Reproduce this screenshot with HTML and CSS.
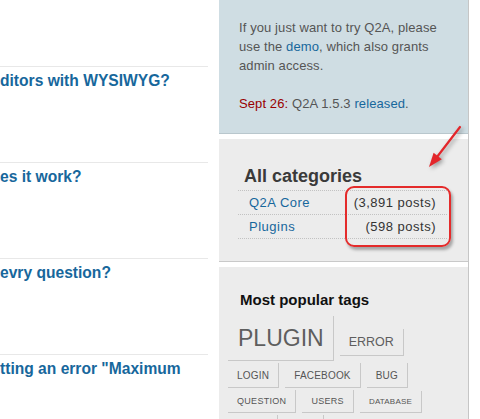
FILE: index.html
```html
<!DOCTYPE html>
<html>
<head>
<meta charset="utf-8">
<link rel="stylesheet" href="styles.css">
</head>
<body>
<div class="page">
  <main class="qlist">
    <div class="qtop"></div>
    <div class="qitem"><a class="qtitle" href="#">ditors with WYSIWYG?</a></div>
    <div class="qitem"><a class="qtitle" href="#">es it work?</a></div>
    <div class="qitem"><a class="qtitle" href="#">evry question?</a></div>
    <div class="qitem"><a class="qtitle" href="#">tting an error "Maximum</a></div>
  </main>
  <aside class="side">
    <div class="box info">
      <p>If you just want to try Q2A, please<br>use the <a href="#">demo</a>, which also grants<br>admin access.</p>
      <p><span class="date">Sept 26:</span> Q2A 1.5.3 <a href="#">released</a>.</p>
    </div>
    <div class="box cats">
      <h2 class="cats-title">All categories</h2>
      <ul class="catlist">
        <li class="cat"><a href="#">Q2A Core</a><span class="count">(3,891 posts)</span></li>
        <li class="cat"><a href="#">Plugins</a><span class="count">(598 posts)</span></li>
      </ul>
    </div>
    <div class="box tags">
      <h2 class="tags-title">Most popular tags</h2>
      <div class="cloud">
        <div class="tagrow">
          <a class="tag t23" href="#">PLUGIN</a>
          <a class="tag t12" href="#">ERROR</a>
        </div>
        <div class="tagrow">
          <a class="tag t10" href="#">LOGIN</a>
          <a class="tag t10" href="#">FACEBOOK</a>
          <a class="tag t10" href="#">BUG</a>
        </div>
        <div class="tagrow">
          <a class="tag t9" href="#">QUESTION</a>
          <a class="tag t9" href="#">USERS</a>
          <a class="tag t8" href="#">DATABASE</a>
        </div>
        <div class="tagrow">
          <span class="tag tag-cut w50"></span>
          <span class="tag tag-cut w40"></span>
        </div>
      </div>
    </div>
  </aside>
  <div class="annot-rect"></div>
  <svg class="annot-arrow" width="480" height="419" viewBox="0 0 480 419">
    <g class="arrow">
      <line x1="460" y1="127" x2="437" y2="157" stroke="#e3262b" stroke-width="2.2" stroke-linecap="round"/>
      <polygon points="429,167 441.8,159.2 433.6,152.8" fill="#e3262b"/>
    </g>
  </svg>
</div>
</body>
</html>
```
FILE: styles.css
```css
html, body {
  margin: 0;
  padding: 0;
  overflow: hidden;
  background: #ffffff;
}

body {
  font-family: "Liberation Sans", Arial, sans-serif;
  width: 480px;
  height: 419px;
}

.page {
  position: relative;
  display: flex;
  align-items: flex-start;
  width: 480px;
  height: 419px;
  overflow: hidden;
}

/* ---------- question list ---------- */
.qlist {
  width: 208px;
  flex: none;
}

.qtop {
  height: 66px;
}

.qitem {
  border-top: 1px solid #e8e8e8;
  padding-top: 4px;
  box-sizing: border-box;
  height: 96px;
}

.qtitle {
  display: block;
  font-size: 15.6px;
  line-height: 20px;
  font-weight: bold;
  color: #17679c;
  text-decoration: none;
  white-space: nowrap;
}

/* ---------- sidebar ---------- */
.side {
  flex: none;
  width: 249px;
  margin-left: 11px;
  border-right: 1px solid #c6c6c6;
  min-height: 419px;
}

.box {
  box-sizing: border-box;
}

.info {
  background: #cfdde3;
  border-bottom: 1px solid #b9c7cd;
  padding: 18px 10px 20px 20px;
  font-size: 13px;
  line-height: 19px;
  letter-spacing: 0.1px;
  color: #555555;
}

.info p {
  margin: 0;
  white-space: nowrap;
}

.info p + p {
  margin-top: 19px;
}

.info a {
  color: #17679c;
  text-decoration: none;
}

.date {
  color: #990000;
}

.cats {
  margin-top: 5px;
  background: #ececec;
  border-bottom: 1px solid #c9c9c9;
  padding: 26px 21px 22px 19px;
}

.cats-title {
  margin: 0 0 3px 6px;
  font-size: 18px;
  line-height: 22px;
  font-weight: bold;
  color: #3a3a3a;
}

.catlist {
  list-style: none;
  margin: 0;
  padding: 0;
  border-top: 1px dotted #c2c2c2;
}

.cat {
  display: flex;
  justify-content: space-between;
  align-items: center;
  height: 24px;
  box-sizing: border-box;
  padding: 0 11px;
  border-bottom: 1px dotted #c2c2c2;
  font-size: 13px;
  letter-spacing: 0.5px;
}

.cat a {
  color: #17679c;
  text-decoration: none;
}

.count {
  color: #333333;
}

.tags {
  margin-top: 5px;
  background: #ececec;
  padding: 24px 9px 0 9px;
  min-height: 160px;
}

.tags-title {
  margin: 0 0 7px 12px;
  font-size: 15px;
  line-height: 18px;
  font-weight: bold;
  color: #111111;
}

.cloud {
  display: flex;
  flex-direction: column;
  gap: 2px;
}

.tagrow {
  display: flex;
  align-items: baseline;
  gap: 6px;
}

.tag {
  display: block;
  color: #555555;
  text-decoration: none;
  border-right: 1px solid #c8c8c8;
  border-bottom: 1px solid #c8c8c8;
  white-space: nowrap;
}

.t23 {
  font-size: 23px;
  line-height: 26px;
  padding: 9px 9px 9px 10px;
  color: #5e5e5e;
}

.t12 {
  font-size: 12.5px;
  line-height: 15px;
  padding: 6px 9px 5px 9px;
  color: #5e5e5e;
}

.t10 {
  font-size: 10px;
  line-height: 12px;
  padding: 7px 9px 5px 9px;
  letter-spacing: 0.2px;
}

.t9 {
  font-size: 9px;
  line-height: 11px;
  padding: 6px 9px 5px 9px;
  letter-spacing: 0.3px;
}

.t8 {
  font-size: 8px;
  line-height: 10px;
  padding: 6px 9px 5px 9px;
  letter-spacing: 0.2px;
}

.tag-cut {
  height: 22px;
  box-sizing: border-box;
}

.w50 {
  width: 50px;
}

.w40 {
  width: 40px;
}

/* ---------- annotations ---------- */
.annot-rect {
  position: absolute;
  left: 345px;
  top: 186px;
  width: 106px;
  height: 61px;
  box-sizing: border-box;
  border: 2px solid #e42b2b;
  border-radius: 9px;
  box-shadow: 2px 3px 3px rgba(0, 0, 0, 0.3);
}

.annot-arrow {
  position: absolute;
  left: 0;
  top: 0;
  pointer-events: none;
}

.arrow {
  filter: drop-shadow(2px 2px 2px rgba(0, 0, 0, 0.35));
}
```
